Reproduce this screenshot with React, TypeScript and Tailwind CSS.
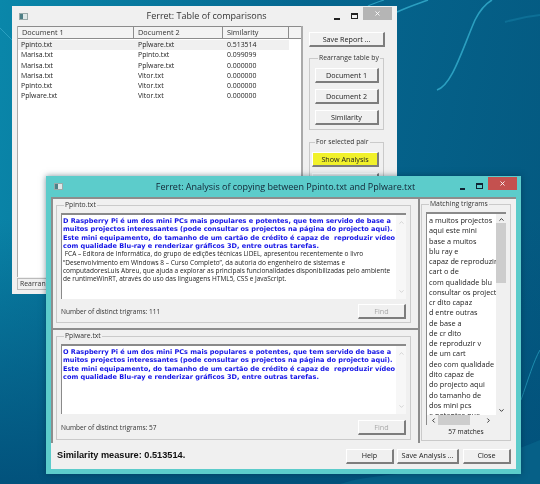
import { ChevronDown, ChevronLeft, ChevronRight, ChevronUp, X } from 'lucide-react'
import { clsx } from 'clsx'
import { ReactNode } from 'react'

const ROWS = [
  ['Ppinto.txt', 'Pplware.txt', '0.513514'],
  ['Marisa.txt', 'Ppinto.txt', '0.099099'],
  ['Marisa.txt', 'Pplware.txt', '0.000000'],
  ['Marisa.txt', 'Vitor.txt', '0.000000'],
  ['Ppinto.txt', 'Vitor.txt', '0.000000'],
  ['Pplware.txt', 'Vitor.txt', '0.000000'],
]

const TRIGRAMS = [
  'a muitos projectos', 'aqui este mini', 'base a muitos', 'blu ray e', 'capaz de reproduzir', 'cart o de',
  'com qualidade blu', 'consultar os project', 'cr dito capaz', 'd entre outras', 'de base a', 'de cr dito',
  'de reproduzir v', 'de um cart', 'deo com qualidade', 'dito capaz de', 'do projecto aqui', 'do tamanho de',
  'dos mini pcs', 'e potentes que',
]

const BLUE_LINES = [
  'O Raspberry Pi é um dos mini PCs mais populares e potentes, que tem servido de base a',
  'muitos projectos interessantes (pode consultar os projectos na página do projecto aqui).',
  'Este mini equipamento, do tamanho de um cartão de crédito é capaz de  reproduzir vídeo',
  'com qualidade Blu-ray e renderizar gráficos 3D, entre outras tarefas.',
]

const PLAIN_LINES = [
  ' FCA – Editora de Informática, do grupo de edições técnicas LIDEL, apresentou recentemente o livro',
  '“Desenvolvimento em Windows 8 – Curso Completo”, da autoria do engenheiro de sistemas e',
  'computadoresLuís Abreu, que ajuda a explorar as principais funcionalidades disponibilizadas pelo ambiente',
  'de runtimeWinRT, através do uso das linguagens HTML5, CSS e JavaScript.',
]

function Btn({ children, className }: { children?: ReactNode; className?: string }) {
  return (
    <div className={clsx('flex items-center justify-center border-r-2 border-b-2 border-[#7d7d7d] border-t border-l border-t-white border-l-white text-[7.2px] text-[#222] whitespace-nowrap', className)}>
      {children}
    </div>
  )
}

function Group({ label, className, children }: { label: string; className?: string; children: ReactNode }) {
  return (
    <fieldset className={clsx('border border-[#cacaca] min-w-0', className)}>
      <legend className="ml-[3px] px-[1px] text-[6.8px] leading-[8px] text-[#333] whitespace-nowrap">{label}</legend>
      {children}
    </fieldset>
  )
}

function TitleIcon() {
  return (
    <div className="w-[9px] h-[7px] bg-[#dfe8e8] border border-[#9aa] flex">
      <div className="w-[3px] h-full bg-[#4d7f86]" />
    </div>
  )
}

function TextPanel({ name, count, first, plain, height, gap }: { name: string; count: number; first: string; plain?: boolean; height: string; gap: string }) {
  return (
    <Group label={name} className="px-[4px] pb-[3px] h-full">
      <div className={clsx('mt-[4px] flex bg-white border-t-2 border-l border-[#8a8a8a]', height)}>
        <div className="flex-1 min-w-0 overflow-hidden pt-[2px] pl-[1px] text-[6.5px] leading-[8.33px] whitespace-pre">
          {BLUE_LINES.map((line, i) => (
            <div key={i} className="font-['DejaVu_Sans'] font-bold text-[6.55px] text-[#1414e6]">
              {i === 0 ? first + line.slice(1) : line}
            </div>
          ))}
          {plain && PLAIN_LINES.map((line, i) => <div key={i} className="text-[#222]">{line}</div>)}
        </div>
        <div className="w-[10px] flex flex-col justify-between py-[4px] items-center bg-[#f7f7f7]">
          <ChevronUp size={7} className="text-[#bbb]" />
          <ChevronDown size={7} className="text-[#bbb]" />
        </div>
      </div>
      <div className={clsx('flex items-center justify-between', gap)}>
        <span className="text-[6.55px] text-[#333]">Number of distinct trigrams: {count}</span>
        <Btn className="w-[48px] h-[15px] text-[#aaa]">Find</Btn>
      </div>
    </Group>
  )
}

function BackWindow() {
  return (
    <div className="absolute left-[12px] top-[6px] w-[385px] h-[288px] bg-[#f0f0f0] flex flex-col">
      <div className="h-[20px] shrink-0 flex items-center pl-[7px]">
        <TitleIcon />
        <span className="flex-1 text-center text-[9px] text-[#333] pl-[51px]">Ferret: Table of comparisons</span>
        <div className="w-[6px] h-[2px] bg-[#222] mt-[5px] mr-[11px]" />
        <div className="w-[7px] h-[6px] border border-[#222] border-t-2 mr-[5px]" />
        <div className="w-[29px] h-[13px] -mt-[5px] mr-[5px] bg-[#b5b5b5] flex items-center justify-center">
          <X size={7} strokeWidth={3} className="text-white" />
        </div>
      </div>
      <div className="flex flex-1 min-h-0">
        <div className="w-[291px] shrink-0 pl-[5px] flex flex-col">
          <div className="flex-1 min-h-0 border-l border-r-2 border-[#aaa] bg-white flex flex-col">
            <div className="flex h-[13px] shrink-0 border-y border-[#8c8c8c] bg-[#f3f3f3] text-[7.3px] text-[#333]">
              <div className="w-[116px] pl-[4px] border-r border-[#8c8c8c]">Document 1</div>
              <div className="w-[89px] pl-[4px] border-r border-[#8c8c8c]">Document 2</div>
              <div className="w-[66px] pl-[4px] border-r border-[#8c8c8c]">Similarity</div>
            </div>
            <div className="pt-[1px] text-[6.9px] leading-[10.3px] text-[#222]">
              {ROWS.map((row, i) => (
                <div key={i} className={clsx('flex w-[271px]', i === 0 && 'bg-[#f0f0f0]')}>
                  <div className="w-[116px] pl-[3px]">{row[0]}</div>
                  <div className="w-[89px] pl-[4px]">{row[1]}</div>
                  <div className="pl-[4px]">{row[2]}</div>
                </div>
              ))}
            </div>
          </div>
          <div className="h-[12px] shrink-0 mt-[1px] mb-[4px] border border-[#bbb] text-[6.9px] leading-[10px] text-[#333] pl-[2px]">Rearrange</div>
        </div>
        <div className="flex-1 min-w-0 pl-[6px] pr-[12px] pt-[6px] flex flex-col">
          <Btn className="h-[15px] w-full">Save Report ...</Btn>
          <Group label="Rearrange table by" className="mt-[7px] mr-[1px] h-[76px] pl-[5px] pr-[4px]">
            <div className="flex flex-col gap-[6px] pt-[6px]">
              <Btn className="h-[15px]">Document 1</Btn>
              <Btn className="h-[15px]">Document 2</Btn>
              <Btn className="h-[15px]">Similarity</Btn>
            </div>
          </Group>
          <Group label="For selected pair" className="mt-[8px] mr-[1px] h-[60px] pl-[2px] pr-[4px]">
            <div className="flex flex-col gap-[6px] pt-[6px]">
              <Btn className="h-[15px] bg-[#f1f12a]">Show Analysis</Btn>
              <Btn className="h-[15px]" />
            </div>
          </Group>
        </div>
      </div>
    </div>
  )
}

function FrontWindow() {
  return (
    <div className="absolute left-[46px] top-[176px] w-[475px] h-[298px] bg-[#5ccccb] flex flex-col px-[5px] pb-[5px] shadow-[0_0_6px_rgba(0,40,60,0.5)]">
      <div className="h-[21px] shrink-0 flex items-center pl-[3px]">
        <TitleIcon />
        <span className="flex-1 text-center text-[9px] text-[#123] pl-[48px]">Ferret: Analysis of copying between Ppinto.txt and Pplware.txt</span>
        <div className="w-[5px] h-[2px] bg-[#123] mt-[5px] mr-[11px]" />
        <div className="w-[7px] h-[6px] border border-[#123] border-t-2 mr-[5px] -mt-[1px]" />
        <div className="w-[29px] h-[13px] -mt-[7px] -mr-[1px] bg-[#c4514f] flex items-center justify-center">
          <X size={7} strokeWidth={3} className="text-white" />
        </div>
      </div>
      <div className="flex-1 min-h-0 bg-[#f0f0f0] flex flex-col">
        <div className="h-[246px] shrink-0 flex border-t-2 border-[#8d8d8d] border-l-2">
          <div className="w-[365px] shrink-0 flex flex-col">
            <div className="h-[131px] shrink-0 pt-[2px] pb-[5px] pl-[3px] pr-[7px] border-b-2 border-[#8d8d8d]">
              <TextPanel name="Ppinto.txt" count={111} first="D" plain height="h-[86px]" gap="mt-[5px]" />
            </div>
            <div className="h-[113px] shrink-0 pt-[2px] pb-[3px] pl-[3px] pr-[7px]">
              <TextPanel name="Pplware.txt" count={57} first="O" height="h-[70px]" gap="mt-[6px]" />
            </div>
          </div>
          <div className="flex-1 min-w-0 border-l-2 border-[#8d8d8d] pl-[1px] pr-[5px] pt-[1px] pb-[2px]">
            <Group label="Matching trigrams" className="h-full px-[4px]">
              <div className="mt-[4px] h-[213px] bg-white border-t-2 border-l border-[#8a8a8a] flex flex-col">
                <div className="flex-1 min-h-0 flex">
                  <div className="flex-1 min-w-0 overflow-hidden pl-[2px] pt-[1px] text-[7.3px] leading-[10.27px] text-[#222] whitespace-nowrap">
                    {TRIGRAMS.map(t => <div key={t}>{t}</div>)}
                  </div>
                  <div className="w-[10px] bg-[#f0f0f0] flex flex-col items-center justify-between pt-[2px] pb-[1px]">
                    <div className="flex flex-col items-center w-full">
                      <ChevronUp size={7} strokeWidth={3} className="text-[#222]" />
                      <div className="w-full h-[60px] bg-[#cdcdcd]" />
                    </div>
                    <ChevronDown size={7} strokeWidth={3} className="text-[#222]" />
                  </div>
                </div>
                <div className="h-[10px] shrink-0 bg-[#f0f0f0] flex items-center pl-[3px] pr-[14px]">
                  <ChevronLeft size={7} strokeWidth={3} className="text-[#222]" />
                  <div className="ml-[1px] w-[32px] h-full bg-[#cdcdcd]" />
                  <div className="flex-1" />
                  <ChevronRight size={7} strokeWidth={3} className="text-[#222]" />
                </div>
              </div>
              <div className="text-center text-[6.6px] leading-[14px] text-[#222]">57 matches</div>
            </Group>
          </div>
        </div>
        <div className="flex-1 flex items-center pl-[6px] pr-[5px]">
          <span className="flex-1 font-['Liberation_Sans'] font-bold text-[9.2px] text-[#111]">Similarity measure: 0.513514.</span>
          <Btn className="w-[48px] h-[15px]">Help</Btn>
          <Btn className="w-[62px] h-[15px] ml-[3px]">Save Analysis ...</Btn>
          <Btn className="w-[48px] h-[15px] ml-[4px]">Close</Btn>
        </div>
      </div>
    </div>
  )
}

export default function App() {
  return (
    <div className="relative w-[540px] h-[484px] overflow-hidden blur-[0.25px] font-['Open_Sans',sans-serif] bg-[linear-gradient(180deg,transparent_45%,#02527c_100%),linear-gradient(100deg,#0a87aa_0%,#05668f_50%,#04587f_100%)]">
      <svg className="absolute inset-0" width="540" height="484" fill="none">
        <path d="M437 90 C452 85 462 50 475 20 C480 10 485 4 492 0" stroke="#2b9fc0" strokeWidth="1.6" />
        <path d="M397 12 C410 6 420 3 428 0" stroke="#2b9fc0" strokeWidth="1.6" />
        <path d="M368 6 C372 4 378 2 384 0" stroke="#2b9fc0" strokeWidth="1.2" />
        <path d="M0 28 L12 40" stroke="#2b9fc0" strokeWidth="1" />
        <path d="M505 22 C518 18 530 16 540 15" stroke="#0d6f96" strokeWidth="2" />
        <path d="M521 400 C528 380 534 360 540 350" stroke="#1d8cae" strokeWidth="1" />
        <path d="M340 484 C380 470 450 478 540 440 L540 484 Z" fill="#0a6d92" opacity="0.5" />
      </svg>
      <BackWindow />
      <FrontWindow />
    </div>
  )
}
